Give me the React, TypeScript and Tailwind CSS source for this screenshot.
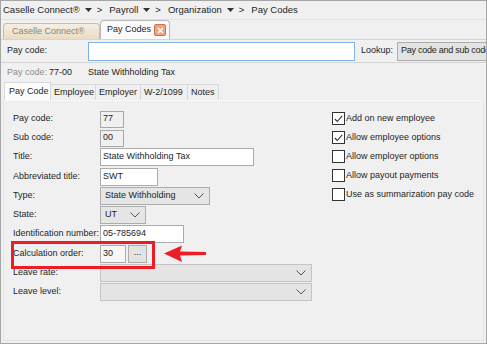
import React from 'react'

const Caret = () => (
  <svg width="7" height="4" viewBox="0 0 7 4" className="mx-[5px]">
    <path d="M0 0h7L3.5 4z" fill="#333" />
  </svg>
)

const Chevron = () => (
  <svg width="10" height="6" viewBox="0 0 10 6">
    <path d="M0.5 0.5L5 5L9.5 0.5" fill="none" stroke="#555" strokeWidth="1" />
  </svg>
)

const Check = ({ on }: { on: boolean }) => (
  <span className="w-[13px] h-[13px] border border-[#333] bg-white flex items-center justify-center shrink-0">
    {on && (
      <svg width="9" height="8" viewBox="0 0 9 8">
        <path d="M0.8 4L3.3 6.5L8.2 0.8" fill="none" stroke="#333" strokeWidth="1.1" />
      </svg>
    )}
  </span>
)

function Row({ label, children, extra = '' }: { label: string; children: React.ReactNode; extra?: string }) {
  return (
    <div className={`flex items-center h-[18px] ${extra}`}>
      <span className="w-[87px] shrink-0">{label}</span>
      {children}
    </div>
  )
}

function Select({ w, value = '', disabled = false }: { w: string; value?: string; disabled?: boolean }) {
  return (
    <div className={`${w} h-[18px] flex items-center justify-between pl-[4px] pr-[5px] border ${disabled ? 'bg-[#e4e4e4] border-[#c4c4c4]' : 'bg-[#e5e5e5] border-[#adadad]'}`}>
      <span>{value}</span>
      <Chevron />
    </div>
  )
}

export default function App() {
  const checks = [
    { label: 'Add on new employee', on: true },
    { label: 'Allow employee options', on: true },
    { label: 'Allow employer options', on: false },
    { label: 'Allow payout payments', on: false },
    { label: 'Use as summarization pay code', on: false },
  ]

  return (
    <div className="relative w-[487px] h-[344px] bg-[#f0f0f0] border border-[#a6a6a6] overflow-hidden flex flex-col text-[#1e1e1e] text-[9px] font-['Liberation_Sans',sans-serif]">
      {/* breadcrumb */}
      <div className="h-[19px] flex items-center pl-[2px] text-[9.5px] border-b border-[#e2e2e2] whitespace-nowrap">
        <span>Caselle Connect®</span>
        <Caret />
        <span>&gt;</span>
        <span className="ml-[7px]">Payroll</span>
        <Caret />
        <span>&gt;</span>
        <span className="ml-[7px]">Organization</span>
        <Caret />
        <span>&gt;</span>
        <span className="ml-[7px]">Pay Codes</span>
      </div>

      {/* window tabs */}
      <div className="h-[20px] flex items-end pl-[2px] border-b border-[#c9d7e6] text-[9px] whitespace-nowrap">
        <div className="w-[97px] h-[16px] flex items-center pl-[8px] rounded-t-[4px] border border-b-0 border-[#c8bca4] bg-gradient-to-b from-[#f6efe2] to-[#e9dcc4] text-[#8a8478]">
          Caselle Connect®
        </div>
        <div className="w-[70px] h-[19px] flex items-center pl-[6px] rounded-t-[4px] border border-b-0 border-[#b9b9b9] bg-[#fbfbfb]">
          <span>Pay Codes</span>
          <span className="ml-auto mr-[3px] w-[12px] h-[12px] rounded-[2px] border border-[#c8744c] bg-[#eea383] flex items-center justify-center">
            <svg width="7" height="7" viewBox="0 0 7 7">
              <path d="M1 1L6 6M6 1L1 6" stroke="#fff" strokeWidth="1.6" />
            </svg>
          </span>
        </div>
      </div>

      {/* lookup */}
      <div className="h-[23px] flex items-center pl-[6px] border-b border-[#d4d4d4]">
        <span className="w-[81px]">Pay code:</span>
        <div className="w-[267px] h-[19px] bg-white border border-[#7fb3e6]" />
        <span className="ml-[6px] w-[36px]">Lookup:</span>
        <div className="flex-1 h-[19px] flex items-center pl-[3px] bg-[#e3e3e3] border border-r-0 border-[#adadad] whitespace-nowrap overflow-hidden tracking-[-0.25px]">
          Pay code and sub code
        </div>
      </div>

      {/* info */}
      <div className="h-[19px] flex items-center pl-[6px]">
        <span className="w-[42px] text-[#8c8c8c]">Pay code:</span>
        <span className="w-[39px]">77-00</span>
        <span>State Withholding Tax</span>
      </div>

      {/* sub tabs */}
      <div className="h-[18px] flex items-end pl-[3px] text-[9px]">
        <div className="w-[47px] h-[18px] flex items-center pl-[4px] bg-[#fcfcfc] border border-b-0 border-[#d9d9d9]">Pay Code</div>
        {['Employee', 'Employer', 'W-2/1099', 'Notes'].map((t, i) => (
          <div
            key={t}
            className={`h-[16px] flex items-center px-[3px] border border-b-0 border-l-0 border-[#d9d9d9] ${['w-[45px]', 'w-[45px]', 'w-[47px]', 'w-[31px]'][i]}`}
          >
            {t}
          </div>
        ))}
      </div>

      {/* panel */}
      <div className="flex-1 mx-[2px] mb-[2px] border border-[#d9d9d9] border-t-[#ffffff] border-dotted flex pt-[9px] pl-[9px]">
        <div className="flex flex-col gap-[1px] w-[318px]">
          <Row label="Pay code:">
            <div className="w-[24px] h-[17px] flex items-center pl-[2px] bg-[#f0f0f0] border border-[#a8a8a8]">77</div>
          </Row>
          <Row label="Sub code:">
            <div className="w-[24px] h-[17px] flex items-center pl-[2px] bg-[#f0f0f0] border border-[#a8a8a8]">00</div>
          </Row>
          <Row label="Title:">
            <div className="w-[154px] h-[18px] flex items-center pl-[2px] bg-white border border-[#ababab]">State Withholding Tax</div>
          </Row>
          <Row label="Abbreviated title:" extra="mt-[1px]">
            <div className="w-[58px] h-[18px] flex items-center pl-[2px] bg-white border border-[#ababab]">SWT</div>
          </Row>
          <Row label="Type:">
            <Select w="w-[110px]" value="State Withholding" />
          </Row>
          <Row label="State:">
            <Select w="w-[46px]" value="UT" />
          </Row>
          <Row label="Identification number:">
            <div className="w-[84px] h-[18px] flex items-center pl-[2px] bg-white border border-[#ababab]">05-785694</div>
          </Row>
          <Row label="Calculation order:" extra="mt-[1px]">
            <div className="w-[26px] h-[18px] flex items-center pl-[2px] bg-[#f7f7f7] border border-[#ababab]">30</div>
            <div className="ml-[2px] w-[19px] h-[18px] flex items-center justify-center pb-[3px] bg-[#e3e3e3] border border-[#adadad]">...</div>
          </Row>
          <Row label="Leave rate:">
            <Select w="w-[212px]" disabled />
          </Row>
          <Row label="Leave level:">
            <Select w="w-[212px]" disabled />
          </Row>
        </div>

        <div className="flex flex-col gap-[6px] pt-[2px] ml-[1px]">
          {checks.map(c => (
            <div key={c.label} className="flex items-center gap-[1px] h-[13px]">
              <Check on={c.on} />
              <span>{c.label}</span>
            </div>
          ))}
        </div>
      </div>

      {/* annotation */}
      <div className="absolute left-[10px] top-[240px] w-[144px] h-[28px] border-[3px] border-[#ee1c24]" />
      <svg className="absolute left-[162px] top-[243px]" width="45" height="20" viewBox="0 0 45 20">
        <path d="M1 9.5L19 1.5L17 7.5L43 8L43 11L17 11.5L19 18z" fill="#ee1c24" />
      </svg>
    </div>
  )
}
